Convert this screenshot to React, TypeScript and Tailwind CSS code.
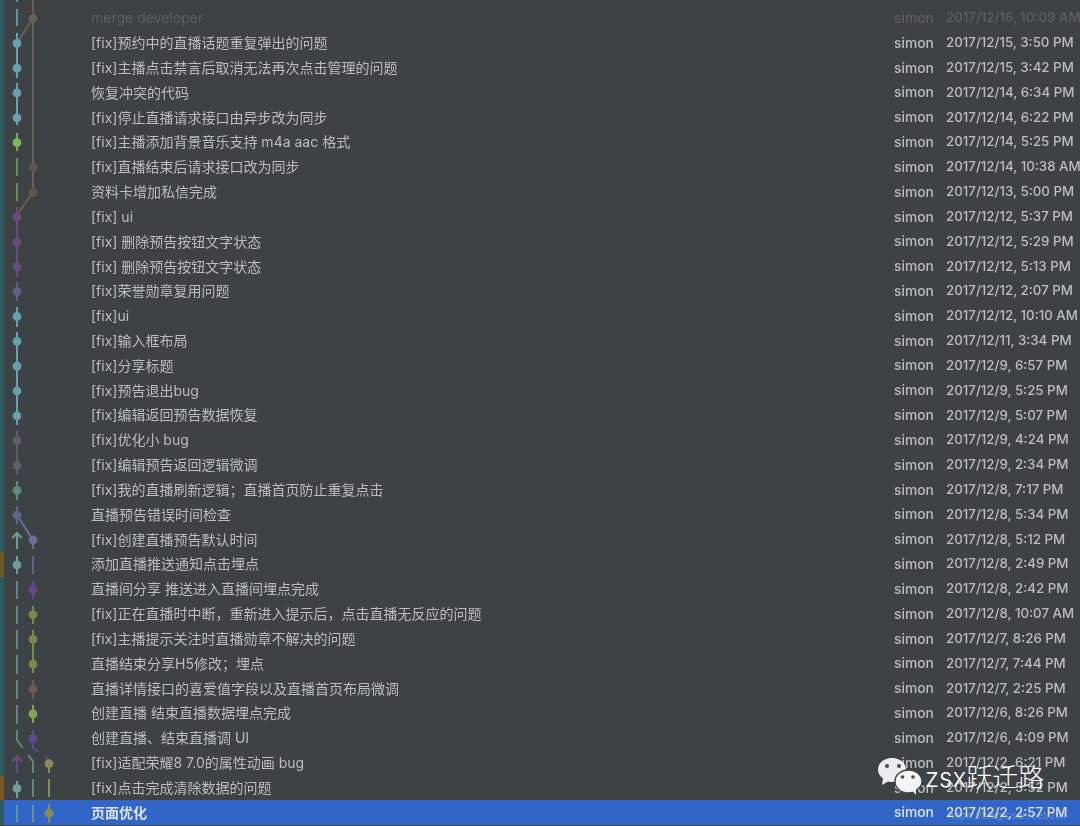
import React from 'react';

type Commit = { msg: string; date: string; stripe?: string };

const commits: Commit[] = [
  { msg: '[fix]直播结束页布局调整', date: '2017/12/16, 10:21 AM' },
  { msg: 'merge developer', date: '2017/12/16, 10:09 AM' },
  { msg: '[fix]预约中的直播话题重复弹出的问题', date: '2017/12/15, 3:50 PM' },
  { msg: '[fix]主播点击禁言后取消无法再次点击管理的问题', date: '2017/12/15, 3:42 PM' },
  { msg: '恢复冲突的代码', date: '2017/12/14, 6:34 PM' },
  { msg: '[fix]停止直播请求接口由异步改为同步', date: '2017/12/14, 6:22 PM' },
  { msg: '[fix]主播添加背景音乐支持 m4a aac 格式', date: '2017/12/14, 5:25 PM' },
  { msg: '[fix]直播结束后请求接口改为同步', date: '2017/12/14, 10:38 AM' },
  { msg: '资料卡增加私信完成', date: '2017/12/13, 5:00 PM' },
  { msg: '[fix] ui', date: '2017/12/12, 5:37 PM' },
  { msg: '[fix] 删除预告按钮文字状态', date: '2017/12/12, 5:29 PM' },
  { msg: '[fix] 删除预告按钮文字状态', date: '2017/12/12, 5:13 PM' },
  { msg: '[fix]荣誉勋章复用问题', date: '2017/12/12, 2:07 PM' },
  { msg: '[fix]ui', date: '2017/12/12, 10:10 AM' },
  { msg: '[fix]输入框布局', date: '2017/12/11, 3:34 PM' },
  { msg: '[fix]分享标题', date: '2017/12/9, 6:57 PM' },
  { msg: '[fix]预告退出bug', date: '2017/12/9, 5:25 PM' },
  { msg: '[fix]编辑返回预告数据恢复', date: '2017/12/9, 5:07 PM' },
  { msg: '[fix]优化小 bug', date: '2017/12/9, 4:24 PM' },
  { msg: '[fix]编辑预告返回逻辑微调', date: '2017/12/9, 2:34 PM' },
  { msg: '[fix]我的直播刷新逻辑；直播首页防止重复点击', date: '2017/12/8, 7:17 PM' },
  { msg: '直播预告错误时间检查', date: '2017/12/8, 5:34 PM' },
  { msg: '[fix]创建直播预告默认时间', date: '2017/12/8, 5:12 PM' },
  { msg: '添加直播推送通知点击埋点', date: '2017/12/8, 2:49 PM', stripe: 'bg-[#6b5a24]' },
  { msg: '直播间分享 推送进入直播间埋点完成', date: '2017/12/8, 2:42 PM' },
  { msg: '[fix]正在直播时中断，重新进入提示后，点击直播无反应的问题', date: '2017/12/8, 10:07 AM' },
  { msg: '[fix]主播提示关注时直播勋章不解决的问题', date: '2017/12/7, 8:26 PM' },
  { msg: '直播结束分享H5修改；埋点', date: '2017/12/7, 7:44 PM' },
  { msg: '直播详情接口的喜爱值字段以及直播首页布局微调', date: '2017/12/7, 2:25 PM' },
  { msg: '创建直播 结束直播数据埋点完成', date: '2017/12/6, 8:26 PM' },
  { msg: '创建直播、结束直播调 UI', date: '2017/12/6, 4:09 PM' },
  { msg: '[fix]适配荣耀8 7.0的属性动画 bug', date: '2017/12/2, 6:21 PM' },
  { msg: '[fix]点击完成清除数据的问题', date: '2017/12/2, 5:52 PM', stripe: 'bg-[#7a5a20]' },
  { msg: '页面优化', date: '2017/12/2, 2:57 PM' },
];

// graph lines: x1 y1 x2 y2 colour
const lines: [number, number, number, number, string][] = [
  [17, -2, 17, 2, '#5f96a3'],
  [17, 9, 17, 26, '#5f96a3'],
  [33, -2, 33, 192, '#6a6052'],
  [33, 18, 19, 40, '#6a6052'],
  [17, 33, 17, 78, '#6a9fb0'],
  [17, 83, 17, 125, '#6a9fb0'],
  [17, 133, 17, 151, '#73a860'],
  [17, 158, 17, 176, '#5f8f55'],
  [17, 183, 17, 201, '#5f8f55'],
  [33, 192, 19, 212, '#6a6052'],
  [17, 207, 17, 277, '#6a4a80'],
  [17, 282, 17, 301, '#5d6088'],
  [17, 307, 17, 327, '#65a0ac'],
  [17, 332, 17, 425, '#65a0ac'],
  [17, 431, 17, 475, '#5c5e6a'],
  [17, 481, 17, 500, '#5f8a80'],
  [17, 506, 17, 524, '#60648c'],
  [17, 515, 33, 540, '#6a6f98'],
  [33, 540, 33, 549, '#6a6f98'],
  [17, 556, 17, 574, '#6f9f95'],
  [33, 556, 33, 574, '#5f6488'],
  [17, 581, 17, 599, '#5f857f'],
  [33, 581, 33, 599, '#5f4a90'],
  [17, 606, 17, 624, '#5f857f'],
  [33, 606, 33, 624, '#80854f'],
  [17, 630, 17, 649, '#5f857f'],
  [33, 630, 33, 673, '#80854f'],
  [17, 655, 17, 674, '#5f857f'],
  [17, 680, 17, 699, '#5f857f'],
  [33, 680, 33, 699, '#6a5a52'],
  [17, 705, 17, 724, '#5f857f'],
  [33, 705, 33, 723, '#80a850'],
  [33, 730, 33, 748, '#5f4a90'],
  [33, 748, 39, 752, '#5f4a90'],
  [44, 755, 49, 760, '#5f4a90'],
  [49, 764, 49, 773, '#8a8a55'],
  [17, 764, 17, 773, '#6a4a80'],
  [17, 781, 17, 798, '#6f9f95'],
  [33, 764, 33, 773, '#5f857f'],
  [33, 779, 33, 797, '#5f857f'],
  [49, 779, 49, 797, '#8a8a55'],
  [17, 805, 17, 822, '#5f9a90'],
  [33, 805, 33, 822, '#5f9a90'],
  [49, 804, 49, 823, '#8a8a55'],
];

// graph dots: x y colour
const dots: [number, number, string][] = [
  [33, 18.5, '#6a6052'],
  [17, 43.3, '#6a9fb0'],
  [17, 68.2, '#6a9fb0'],
  [17, 93, '#6a9fb0'],
  [17, 117.9, '#6a9fb0'],
  [17, 142.7, '#78b860'],
  [33, 167.5, '#5f574c'],
  [33, 192.4, '#5f574c'],
  [17, 217.2, '#6a4a80'],
  [17, 242, '#6a4a80'],
  [17, 266.9, '#6a4a80'],
  [17, 291.7, '#5d6088'],
  [17, 316.5, '#65a0ac'],
  [17, 341.4, '#65a0ac'],
  [17, 366.2, '#65a0ac'],
  [17, 391, '#65a0ac'],
  [17, 415.9, '#65a0ac'],
  [17, 440.7, '#5c5e6a'],
  [17, 465.5, '#5c5e6a'],
  [17, 490.4, '#5f8a80'],
  [17, 515.2, '#60648c'],
  [33, 540, '#6a6f98'],
  [17, 564.9, '#6f9f95'],
  [33, 589.7, '#5f4a90'],
  [33, 614.6, '#80854f'],
  [33, 639.4, '#80854f'],
  [33, 664.2, '#80854f'],
  [33, 689, '#6a5a52'],
  [33, 713.9, '#80a850'],
  [33, 738.7, '#5f4a90'],
  [49, 763.6, '#8a8a55'],
  [17, 788.4, '#6f9f95'],
  [49, 813.2, '#8a8a55'],
];

function CommitGraph() {
  return (
    <svg className="absolute left-0 top-0 blur-[0.4px]" width="60" height="826" viewBox="0 0 60 826" fill="none">
      {lines.map(([x1, y1, x2, y2, c], i) => (
        <line key={i} x1={x1} y1={y1} x2={x2} y2={y2} stroke={c} strokeWidth="2" />
      ))}
      {dots.map(([x, y, c], i) => (
        <circle key={i} cx={x} cy={y} r="4.4" fill={c} />
      ))}
      {/* up arrows where a branch leaves the visible range */}
      <path d="M17 549V533M12.5 538L17 533L21.5 538" stroke="#6f9f95" strokeWidth="2" />
      <path d="M17 773V756M12 762L17 756L22 762" stroke="#6a4a80" strokeWidth="2" />
      {/* bends */}
      <path d="M17 730V740L23 748" stroke="#5f857f" strokeWidth="2" />
      <path d="M28 755L33 761V766" stroke="#5f857f" strokeWidth="2" />
    </svg>
  );
}

function WeChatMark() {
  return (
    <div className="absolute left-[878px] top-[758px] flex items-start">
      <svg width="44" height="39" viewBox="0 0 44 39" className="shrink-0">
        <path d="M14 0C6 0 0 5 0 11.5C0 15.5 2 18.5 5 20.5L4 27L10 23.5C11.5 24 13 24 14 24C22 24 28 18.5 28 11.5C28 5 22 0 14 0Z" fill="#ececec" />
        <path d="M30.5 12C23 12 17 17 17 23.5C17 30 23 35 30.5 35C32 35 33.5 35 35 34.5L39 39L38.5 32C41.5 30 44 27 44 23.5C44 17 38 12 30.5 12Z" fill="#f4f4f4" stroke="#3d4244" strokeWidth="1.4" />
        <circle cx="9" cy="8" r="2" fill="#4a4a4a" />
        <circle cx="21" cy="8" r="2" fill="#4a4a4a" />
        <circle cx="24.5" cy="19" r="1.8" fill="#4a4a4a" />
        <circle cx="35" cy="19" r="1.8" fill="#4a4a4a" />
      </svg>
      <span className="mt-[4px] ml-[3px] font-['Inter','Noto_Sans_CJK_SC',sans-serif] text-[26px] leading-[32px] font-light whitespace-nowrap text-white">zsx跃迁路</span>
    </div>
  );
}

export default function App() {
  return (
    <div className="relative h-[826px] w-[1080px] overflow-hidden bg-[#3d4244] font-['Inter','Noto_Sans_CJK_SC',sans-serif] text-[#bcbebe]">
      <div className="-mt-[19px] blur-[0.35px]">
        {commits.map((c, i) => {
          const dim = i < 2;
          const selected = i === commits.length - 1;
          return (
            <div key={i} className="flex h-[24.84px] items-center">
              <div className={`h-full w-1 shrink-0 ${c.stripe ?? 'bg-[#2c5a60]'}`} />
              <div
                className={`flex h-full min-w-0 flex-1 items-center whitespace-nowrap pl-[87px] ${selected ? 'bg-[#3166c8] text-[#dfe4ee]' : ''} ${dim ? 'text-[#5c6062]' : ''}`}
              >
                <div className={`w-[803px] shrink-0 overflow-hidden pb-[1px] text-[14px] ${selected ? 'font-semibold' : ''}`}>{c.msg}</div>
                <div className="w-[52px] shrink-0 text-[13.8px] font-medium">simon</div>
                <div className="shrink-0 text-[13.3px] font-medium">{c.date}</div>
              </div>
            </div>
          );
        })}
      </div>
      <CommitGraph />
      <WeChatMark />
      <span className="absolute left-[948px] top-[809px] text-[10px] leading-[12px] text-white/25">https://blog.csdn.net/zsx</span>
    </div>
  );
}
